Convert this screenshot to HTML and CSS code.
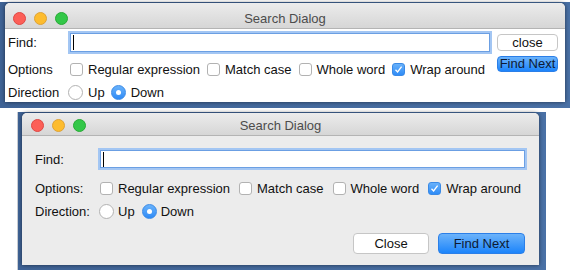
FILE: index.html
```html
<!DOCTYPE html>
<html lang="en">
  <head>
    <meta charset="UTF-8" />
    <title>Search Dialog</title>
    <link rel="stylesheet" href="styles.css">
  </head>
  <body>
    <!-- First screenshot: compact layout -->
    <div class="desktop desktop-top">
      <div class="window">
        <div class="titlebar">
          <span class="lights">
            <i class="light red"></i><i class="light yellow"></i><i class="light green"></i>
          </span>
          <span class="title">Search Dialog</span>
        </div>
        <div class="compact-body">
          <span class="label">Find:</span>
          <div class="field"><span class="caret"></span></div>
          <button class="btn btn-plain btn-small">close</button>

          <span class="label">Options</span>
          <div class="choices">
            <span class="box"></span><span class="text">Regular expression</span>
            <span class="box"></span><span class="text">Match case</span>
            <span class="box"></span><span class="text">Whole word</span>
            <span class="box checked">
              <svg width="9" height="9" viewBox="0 0 9 9"><path d="M1.5 4.8 L3.6 7 L7.6 1.6" fill="none" stroke="#fff" stroke-width="1.3"/></svg>
            </span><span class="text">Wrap around</span>
          </div>
          <button class="btn btn-default btn-small btn-next">Find Next</button>

          <span class="label">Direction</span>
          <div class="choices">
            <span class="radio"></span><span class="text">Up</span>
            <span class="radio selected"></span><span class="text">Down</span>
          </div>
        </div>
      </div>
    </div>

    <!-- Second screenshot: roomier layout -->
    <div class="desktop desktop-bottom">
      <div class="window window-grey">
        <div class="titlebar titlebar-short">
          <span class="lights">
            <i class="light red"></i><i class="light yellow"></i><i class="light green"></i>
          </span>
          <span class="title">Search Dialog</span>
        </div>
        <div class="roomy-body">
          <div class="row row-find">
            <span class="label">Find:</span>
            <div class="field field-short"><span class="caret"></span></div>
          </div>

          <div class="row row-options">
            <span class="label">Options:</span>
            <div class="choices roomy">
              <span class="box"></span><span class="text">Regular expression</span>
              <span class="box"></span><span class="text">Match case</span>
              <span class="box"></span><span class="text">Whole word</span>
              <span class="box checked">
                <svg width="9" height="9" viewBox="0 0 9 9"><path d="M1.5 4.8 L3.6 7 L7.6 1.6" fill="none" stroke="#fff" stroke-width="1.3"/></svg>
              </span><span class="text">Wrap around</span>
            </div>
          </div>

          <div class="row row-direction">
            <span class="label">Direction:</span>
            <div class="choices roomy">
              <span class="radio"></span><span class="text">Up</span>
              <span class="radio selected"></span><span class="text">Down</span>
            </div>
          </div>

          <div class="buttons">
            <button class="btn btn-plain btn-close">Close</button>
            <button class="btn btn-default btn-find">Find Next</button>
          </div>
        </div>
      </div>
    </div>
  </body>
</html>
```

FILE: styles.css
```css
/* Page */
body {
  margin: 0;
  background: #fff;
  font-family: "Liberation Sans", Arial, sans-serif;
  font-size: 13px;
  color: #111;
}

/* Desktop strip behind each window */
.desktop {
  background: linear-gradient(90deg, #3f6396, #4a71a6);
}

.desktop-top {
  margin: 2px 2px 0 0;
  padding: 1px 5px 6px 5px;
}

.desktop-bottom {
  width: 517px;
  margin: 4px 0 0 17px;
  padding: 1px 7px 5px 4px;
  border-left: 1px solid #c9cdd3;
}

/* Window frame */
.window {
  background: #fff;
  border-radius: 5px 5px 0 0;
  box-shadow: 0 0 4px rgba(0, 0, 0, 0.55);
  overflow: hidden;
}

.window-grey {
  background: #ececec;
}

.titlebar {
  display: grid;
  grid-template-columns: 1fr auto 1fr;
  align-items: center;
  height: 20px;
  padding-top: 5px;
  background: linear-gradient(#ececec, #d6d6d6);
  border-bottom: 1px solid #b4b4b4;
}

.titlebar-short {
  padding-top: 2px;
}

.lights {
  display: flex;
  gap: 8px;
  padding-left: 8px;
}

.titlebar-short .lights {
  padding-left: 9px;
}

.light {
  width: 11px;
  height: 11px;
  border-radius: 50%;
  display: block;
}

.red {
  background: #fc5f57;
  border: 0.5px solid #df4744;
}

.yellow {
  background: #fdbc2e;
  border: 0.5px solid #dea236;
}

.green {
  background: #33c748;
  border: 0.5px solid #27aa35;
}

.title {
  color: #4c4c4c;
}

/* First window: three-column grid */
.compact-body {
  display: grid;
  grid-template-columns: 55px 424px 61px;
  grid-template-rows: 23px 30px 16px;
  column-gap: 5px;
  padding: 2px 7px 2px 3px;
  align-items: center;
}

/* Second window: stacked rows */
.roomy-body {
  display: flex;
  flex-direction: column;
  padding: 12px 12px 11px 13px;
}

.row {
  display: flex;
  align-items: center;
  height: 20px;
}

.row .label {
  width: 63px;
  flex: none;
}

.row-find {
  height: 22px;
}

.row-find .field {
  flex: 1;
}

.row-options {
  margin-top: 8px;
}

.row-direction {
  margin-top: 3px;
}

.label {
  white-space: nowrap;
}

/* Text field with focus ring */
.field {
  height: 23px;
  box-sizing: border-box;
  background: #fff;
  border: 2px solid #a3c6f3;
  box-shadow: inset 0 0 0 1px #6b9fe3;
  display: flex;
  align-items: center;
  padding-left: 3px;
}

.field-short {
  height: 22px;
}

.caret {
  width: 1px;
  height: 15px;
  background: #000;
}

/* Checkbox / radio rows */
.choices {
  display: flex;
  align-items: center;
  white-space: nowrap;
}

.box,
.radio {
  box-sizing: border-box;
  background: #fff;
  border: 1px solid #b2b2b2;
  display: flex;
  align-items: center;
  justify-content: center;
  flex: none;
}

.box {
  width: 13px;
  height: 13px;
  border-radius: 3px;
  margin: 0 5px 0 7px;
}

.box:first-child {
  margin-left: 2px;
}

.roomy .box {
  margin-left: 9px;
}

.roomy .box:first-child {
  margin-left: 2px;
}

.box.checked {
  background: linear-gradient(#68b1fa, #2f8cf7);
  border-color: #3a8ae6;
}

.radio {
  width: 15px;
  height: 15px;
  border-radius: 50%;
  margin: 0 5px 0 6px;
}

.radio:first-child {
  margin-left: 0;
}

.roomy .radio {
  margin: 0 4px 0 7px;
}

.roomy .radio:first-child {
  margin-left: 1px;
}

.radio.selected {
  background: linear-gradient(#6ab3fb, #2e8af6);
  border-color: #3a8ae6;
}

.radio.selected::after {
  content: "";
  width: 5px;
  height: 5px;
  border-radius: 50%;
  background: #fff;
}

/* Buttons */
.btn {
  font-family: inherit;
  font-size: 13px;
  color: #111;
  border-radius: 4px;
  padding: 0;
  box-sizing: border-box;
}

.btn-plain {
  background: #fff;
  border: 1px solid #c6c6c6;
}

.btn-default {
  background: linear-gradient(#6cb3fa, #1c84fb);
  border: 1px solid #2b7fe8;
  color: #0d1a33;
}

.btn-small {
  height: 17px;
  line-height: 14px;
}

.btn-next {
  height: 16px;
  align-self: start;
  margin-top: 2px;
}

.buttons {
  display: flex;
  justify-content: flex-end;
  gap: 9px;
  margin-top: 12px;
  padding-right: 2px;
}

.btn-close {
  width: 76px;
  height: 21px;
}

.btn-find {
  width: 87px;
  height: 21px;
}
```
